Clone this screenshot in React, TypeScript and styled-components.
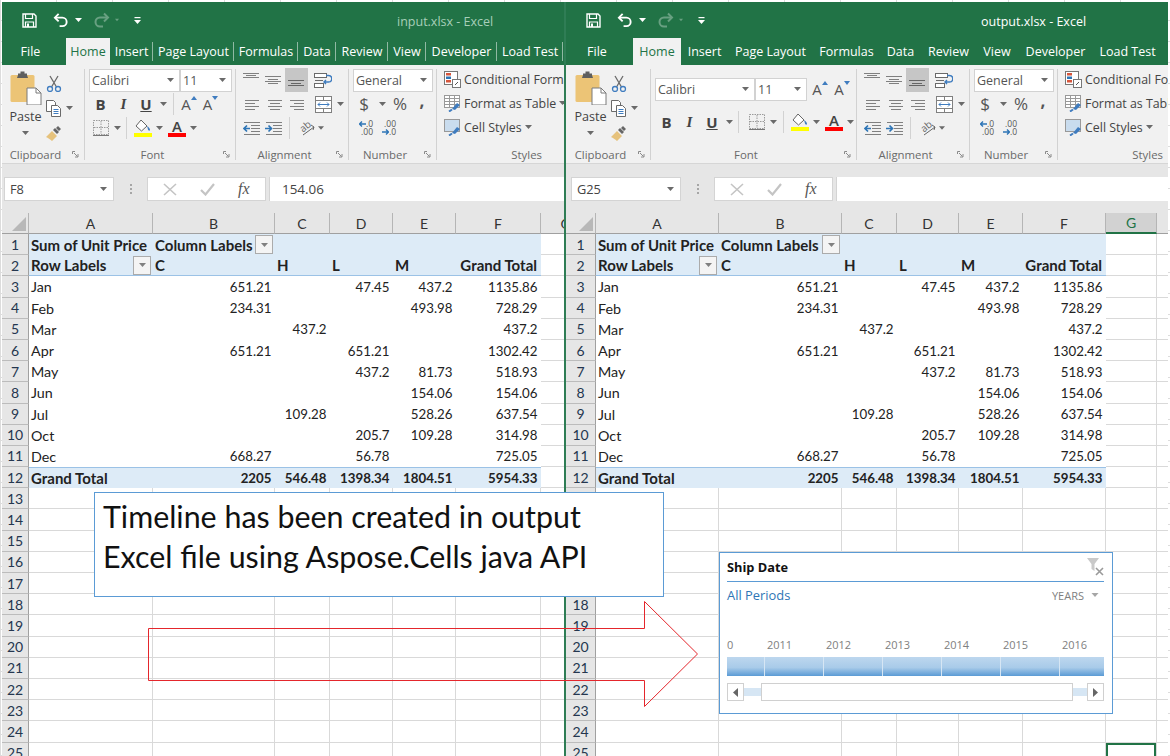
import React from "react";
import styled, { createGlobalStyle } from "styled-components";

const Global = createGlobalStyle`
  html, body { margin: 0; padding: 0; background: #fff; overflow: hidden; }
  #root { width: 1170px; height: 756px; overflow: hidden; }
`;

const UI = `"Open Sans", "Noto Sans", sans-serif`;
const CELL = `Lato, "Liberation Sans", sans-serif`;

const Page = styled.div`
  position: relative; width: 1170px; height: 756px; box-sizing: border-box;
  padding: 2px 2px 0 2px; display: flex; overflow: hidden;
  background-color: #fff;
  background-image: repeating-linear-gradient(90deg, #dcdcdc 0 1px, transparent 1px 56px),
    repeating-linear-gradient(0deg, #dcdcdc 0 1px, transparent 1px 21px);
`;
const Pane = styled.section<{ $w: number; $divider?: boolean }>`
  width: ${(p) => p.$w}px; flex: none; box-sizing: border-box; display: flex; flex-direction: column;
  height: 754px; overflow: hidden; background: #fff; font-family: ${UI};
  ${(p) => p.$divider && "border-left: 2px solid #2f7d55;"}
`;
const TitleBar = styled.div`
  height: 36px; background: #217346; display: flex; align-items: center; flex: none; position: relative;
`;
const Qat = styled.div<{ $w: number }>`
  width: ${(p) => p.$w}px; flex: none; display: flex; align-items: center; padding-left: 19px; box-sizing: border-box;
`;
const QatSlot = styled.span<{ $w: number; $off?: boolean; $ml?: number }>`
  width: ${(p) => p.$w}px; flex: none; display: flex; align-items: center; justify-content: center;
  margin-left: ${(p) => p.$ml || 0}px;
  opacity: ${(p) => (p.$off ? 0.32 : 1)};
`;
const TitleText = styled.div<{ $active?: boolean }>`
  font-size: 12.5px; padding-top: 3px; white-space: nowrap; color: ${(p) => (p.$active ? "#fff" : "#a7cfb9")};
`;
const Tabs = styled.div`
  height: 27px; background: #217346; display: flex; flex: none; align-items: stretch;
`;
const Tab = styled.div<{ $w: number; $sep?: boolean; $active?: boolean; $gap?: number }>`
  width: ${(p) => p.$w}px; margin-right: ${(p) => p.$gap || 0}px; flex: none; box-sizing: border-box;
  display: flex; align-items: center; justify-content: center; position: relative; white-space: nowrap;
  font-size: 12.5px; padding-bottom: 1px;
  color: ${(p) => (p.$active ? "#217346" : "#fff")};
  background: ${(p) => (p.$active ? "#f1f1f1" : "transparent")};
  ${(p) => p.$sep && `&::after { content: ""; position: absolute; right: 0; top: 4px; bottom: 4px; width: 1px; background: rgba(255,255,255,.5); }`}
`;
const Ribbon = styled.div`
  height: 98px; background: #f1f1f1; display: flex; flex: none; overflow: hidden;
  border-bottom: 1px solid #d6d6d6; box-sizing: content-box;
`;
const Group = styled.div<{ $w?: number; $fill?: boolean; $noSep?: boolean }>`
  position: relative; box-sizing: border-box; display: flex; flex-direction: column;
  ${(p) => (p.$fill ? "flex: 1; min-width: 0;" : `width: ${p.$w}px; flex: none;`)}
  ${(p) => !p.$noSep && `&::after { content: ""; position: absolute; right: 0; top: 4px; bottom: 3px; width: 1px; background: #d2d2d2; }`}
`;
const GroupBody = styled.div<{ $top?: number; $gap?: number; $pl?: number; $row?: boolean }>`
  flex: 1; min-height: 0; box-sizing: border-box; display: flex;
  flex-direction: ${(p) => (p.$row ? "row" : "column")};
  ${(p) => p.$row && "justify-content: center;"}
  padding: ${(p) => p.$top ?? 3}px 0 0 ${(p) => p.$pl ?? 4}px;
  gap: ${(p) => p.$gap ?? 0}px;
`;
const GroupFoot = styled.div<{ $pr?: number; $end?: boolean }>`
  height: 18px; flex: none; display: flex; align-items: center; position: relative;
  justify-content: ${(p) => (p.$end ? "flex-end" : "center")};
  padding-right: ${(p) => p.$pr ?? 16}px; box-sizing: border-box;
  font-size: 11.4px; color: #6a6a6a;
`;
const Launcher = styled.span`
  position: absolute; right: 6px; top: 6px; display: flex;
`;
const Row = styled.div<{ $ml?: number }>`
  height: 24px; flex: none; display: flex; align-items: center; margin-left: ${(p) => p.$ml || 0}px; white-space: nowrap;
`;
const Btn = styled.span<{ $w: number; $on?: boolean; $ml?: number }>`
  width: ${(p) => p.$w}px; height: 24px; flex: none; margin-left: ${(p) => p.$ml || 0}px;
  display: flex; align-items: center; justify-content: center; color: #444;
  background: ${(p) => (p.$on ? "#c6c6c6" : "transparent")};
`;
const Letter = styled.span<{ $kind: "b" | "i" | "u" }>`
  font-size: 15px; color: #444; font-weight: 700;
  font-family: ${(p) => (p.$kind === "i" ? `"Liberation Serif", serif` : `"Open Sans", sans-serif`)};
  font-style: ${(p) => (p.$kind === "i" ? "italic" : "normal")};
  text-decoration: ${(p) => (p.$kind === "u" ? "underline" : "none")};
`;
const Glyph = styled.span<{ $size: number; $bold?: boolean; $up?: number }>`
  font-size: ${(p) => p.$size}px; color: #555; font-family: ${UI}; line-height: 18px;
  font-weight: ${(p) => (p.$bold ? 700 : 400)};
  transform: translateY(${(p) => -(p.$up || 0)}px);
`;
const GrowBox = styled.span`
  display: flex; align-items: flex-start; height: 18px;
  & > svg { margin: 1px 0 0 0; flex: none; }
`;
const ColorStack = styled.span`
  display: flex; flex-direction: column; align-items: center; width: 18px; font-size: 15px; line-height: 14px; color: #444; font-weight: 600;
`;
const ColorBar = styled.i<{ $c: string }>`
  display: block; width: 18px; height: 4px; background: ${(p) => p.$c};
`;
const OrientBox = styled.span`
  position: relative; width: 17px; height: 16px; display: block;
`;
const OrientText = styled.span`
  position: absolute; left: 0; top: 0; font-size: 10px; line-height: 12px; color: #666; transform: rotate(-40deg); display: block;
`;
const OrientArrow = styled.svg`
  position: absolute; left: 0; top: 0;
`;
const DecBox = styled.span`
  display: flex; flex-direction: column; align-items: flex-end; font-size: 8.5px; line-height: 8px; color: #555; width: 16px;
`;
const DecLine = styled.span`
  display: flex; align-items: center; gap: 0;
`;
const Sep = styled.span<{ $mx: number }>`
  width: 1px; height: 22px; background: #d2d2d2; flex: none; margin: 0 ${(p) => p.$mx}px;
`;
const Select = styled.div<{ $w: number }>`
  width: ${(p) => p.$w}px; height: 23px; flex: none; box-sizing: border-box; background: #fff;
  border: 1px solid #d2d2d2; display: flex; align-items: center; justify-content: space-between;
  padding: 0 5px 0 2px; font-size: 12.5px; color: #555;
`;
const Paste = styled.div`
  width: 38px; flex: none; display: flex; flex-direction: column; align-items: center; font-size: 12.6px; color: #444;
`;
const PasteLabel = styled.span`
  margin-top: 4px; line-height: 16px;
`;
const PasteCaret = styled.span`
  margin-top: 6px; display: flex;
`;
const ClipTools = styled.div`
  width: 36px; flex: none; display: flex; flex-direction: column; padding: 0; gap: 1px;
`;
const StyleLine = styled.div`
  height: 24px; flex: none; display: flex; align-items: center; gap: 3px; white-space: nowrap;
  font-size: 12.4px; color: #444;
  & > svg { flex: none; }
`;
const FormulaBar = styled.div`
  height: 49px; flex: none; background: #e6e6e6; box-sizing: border-box; padding-top: 13px;
  display: flex; align-items: flex-start;
`;
const NameBox = styled.div<{ $w: number; $ml: number }>`
  width: ${(p) => p.$w}px; margin-left: ${(p) => p.$ml}px; height: 24px; box-sizing: border-box; flex: none;
  background: #fff; border: 1px solid #d4d4d4; display: flex; align-items: center; justify-content: space-between;
  padding: 0 6px 0 5px; font-size: 12.8px; color: #444;
`;
const Dots = styled.div<{ $w: number }>`
  width: ${(p) => p.$w}px; height: 24px; flex: none; display: flex; flex-direction: column; align-items: center;
  justify-content: center; gap: 2px;
  & > i { width: 2px; height: 2px; background: #a6a6a6; display: block; }
`;
const FxBox = styled.div`
  width: 119px; height: 24px; flex: none; box-sizing: border-box; background: #fff; border: 1px solid #d4d4d4;
  display: flex; align-items: center; justify-content: space-around; padding: 0 4px;
`;
const FxText = styled.span`
  font-family: "Liberation Serif", serif; font-style: italic; font-size: 16px; color: #555;
`;
const FormulaInput = styled.div`
  flex: 1; height: 24px; margin-left: 3px; box-sizing: border-box; background: #fff; border-left: 1px solid #d4d4d4;
  display: flex; align-items: center; padding-left: 12px; font-size: 13.4px; color: #444;
`;
const Sheet = styled.div<{ $cols: string }>`
  display: grid; grid-template-columns: ${(p) => p.$cols}; grid-template-rows: 21px; grid-auto-rows: 21.2px;
  font-family: ${CELL}; font-size: 14.3px; color: #222; overflow: hidden; flex: 1;
`;
const Corner = styled.div`
  background: #e6e6e6; border-bottom: 1px solid #a0a0a0; border-right: 1px solid #b5b5b5; position: relative;
  &::after { content: ""; position: absolute; right: 2px; bottom: 2px; width: 14px; height: 14px; background: #b8b8b8; clip-path: polygon(100% 0, 100% 100%, 0 100%); }
`;
const ColHead = styled.div<{ $on?: boolean }>`
  background: ${(p) => (p.$on ? "#d2d2d2" : "#e6e6e6")}; display: flex; align-items: center; justify-content: center;
  border-right: 1px solid #b5b5b5; border-bottom: ${(p) => (p.$on ? "2px solid #217346" : "1px solid #a0a0a0")};
  color: ${(p) => (p.$on ? "#217346" : "#333")}; font-size: 14px; overflow: hidden;
`;
const RowHead = styled.div`
  background: #e6e6e6; display: flex; align-items: center; justify-content: center; box-sizing: border-box;
  border-right: 1px solid #a0a0a0; border-bottom: 1px solid #bcbcbc; color: #24364f; font-size: 14px;
`;
const Cell = styled.div<{ $zone: "fill" | "plain" | "grid" | "total" | "label"; $right?: boolean; $bold?: boolean; $num?: boolean; $active?: boolean }>`
  box-sizing: border-box; display: flex; align-items: center; white-space: nowrap; padding: 0 4px 0 2px; min-width: 0;
  justify-content: ${(p) => (p.$right ? "flex-end" : "flex-start")};
  font-weight: ${(p) => (p.$bold ? 700 : 400)};
  ${(p) => p.$bold && "font-size: 15px;"}
  ${(p) => p.$num && "font-size: 13.3px; padding-right: 3.5px;"}
  background: ${(p) => (p.$zone === "fill" || p.$zone === "total" || p.$zone === "label" ? "#ddebf7" : "#fff")};
  ${(p) => p.$zone === "grid" && "border-right: 1px solid #d9d9d9; border-bottom: 1px solid #d9d9d9;"}
  ${(p) => p.$zone === "label" && "border-bottom: 1px solid #9bc2e6;"}
  ${(p) => p.$zone === "total" && "border-top: 1px solid #9bc2e6;"}
  ${(p) => p.$active && "box-shadow: inset 0 0 0 2px #217346;"}
`;
const CellFill = styled.span`
  flex: 1;
`;
const FilterBtn = styled.span`
  width: 18px; height: 19px; flex: none; box-sizing: border-box; background: #f4f4f4; border: 1px solid #ababab;
  display: flex; align-items: center; justify-content: center; margin-right: -2px;
`;
const Callout = styled.div`
  position: absolute; left: 94px; top: 492px; width: 570px; height: 105px; box-sizing: border-box; background: #fff;
  border: 1px solid #5b9bd5; padding: 3px 8px; font-family: ${CELL}; font-size: 30.4px; line-height: 40px; color: #111; white-space: nowrap;
`;
const ArrowSvg = styled.svg`
  position: absolute; left: 0; top: 0; pointer-events: none;
`;
const Timeline = styled.div`
  position: absolute; left: 719px; top: 552px; width: 394px; height: 162px; box-sizing: border-box; background: #fff;
  border: 1px solid #5b9bd5; display: flex; flex-direction: column; padding: 0 8px 0 7px; font-family: ${UI};
`;
const TlHead = styled.div`
  height: 29px; box-sizing: border-box; flex: none; border-bottom: 1px solid #5b9bd5; display: flex; align-items: center; justify-content: space-between;
  font-size: 12.8px; font-weight: 700; color: #111; padding-bottom: 1px;
`;
const TlFilter = styled.span`
  display: flex;
`;
const TlMeta = styled.div`
  height: 27px; flex: none; display: flex; align-items: center; justify-content: space-between;
  font-size: 12.9px; color: #2e75b6; padding-bottom: 1px; box-sizing: border-box;
`;
const TlLevel = styled.span`
  display: flex; align-items: center; gap: 7px; font-size: 11px; color: #808080; padding-right: 5px;
`;
const TlYears = styled.div`
  margin-top: 26px; height: 19px; flex: none; display: grid; grid-template-columns: 38px repeat(5, 59px) 1fr;
  font-size: 11px; color: #808080; align-items: center; line-height: 19px;
`;
const TlYear = styled.span<{ $first?: boolean }>`
  padding-left: ${(p) => (p.$first ? 0 : 2)}px;
`;
const TlBar = styled.div`
  margin-top: 3px; height: 19px; flex: none; display: grid; grid-template-columns: 38px repeat(5, 59px) 1fr;
  background: linear-gradient(#bdd7ee 0%, #a9cbe9 55%, #5b9bd5 100%);
`;
const TlSeg = styled.span<{ $last?: boolean }>`
  border-right: ${(p) => (p.$last ? "none" : "1px solid #d6e6f4")};
`;
const TlScroll = styled.div`
  margin-top: 7px; height: 18px; flex: none; display: flex; align-items: center;
`;
const TlArrow = styled.span`
  width: 17px; height: 18px; box-sizing: border-box; flex: none; border: 1px solid #d0d0d0; background: #fff;
  display: flex; align-items: center; justify-content: center;
`;
const TlTrack = styled.span<{ $w: number }>`
  width: ${(p) => p.$w}px; height: 8px; flex: none; background: #d6e6f4;
`;
const TlThumb = styled.span`
  flex: 1; height: 18px; box-sizing: border-box; border: 1px solid #d0d0d0; background: #fff;
`;

/* ---------- icons ---------- */
const Caret = ({ c = "#6a6a6a", w = 7 }: { c?: string; w?: number }) => (
  <svg width={w} height={4} viewBox="0 0 7 4"><path d="M0 0h7L3.5 4z" fill={c} /></svg>
);
const SaveIcon = () => (
  <svg width="15" height="15" viewBox="0 0 15 15" fill="none" stroke="#fff" strokeWidth="1.4">
    <path d="M1 1h11l2 2v11H1z" /><path d="M3.5 1v4.5h7V1" strokeWidth="1.2" /><path d="M3.5 14V9h8v5" strokeWidth="1.2" /><rect x="5" y="10.5" width="2" height="3.5" fill="#fff" stroke="none" />
  </svg>
);
const UndoIcon = ({ flip }: { flip?: boolean }) => (
  <svg width="17" height="16" viewBox="0 0 17 16" fill="none" stroke="#fff" strokeWidth="2" style={flip ? { transform: "scaleX(-1)" } : undefined}>
    <path d="M6 1.5L2 5.5l4 4" /><path d="M2.5 5.5H10a4.5 4.5 0 0 1 0 9H7" />
  </svg>
);
const QatMore = () => (
  <svg width="7" height="7" viewBox="0 0 7 7" fill="#fff"><rect x="0.5" y="0" width="6" height="1.2" /><path d="M0 3h7L3.5 7z" /></svg>
);
const PasteIcon = () => (
  <svg width="32" height="34" viewBox="0 0 32 34">
    <rect x="0.5" y="4" width="24" height="27" rx="1.5" fill="#ecc476" />
    <path d="M8 4V2.5h2.5V0.5h4V2.5H17V4l1 3H7z" fill="#5f5f5f" />
    <path d="M17 17h9l5 5v12H17z" fill="#fff" stroke="#7a7a7a" />
    <path d="M26 17v5h5" fill="none" stroke="#7a7a7a" />
  </svg>
);
const CutIcon = () => (
  <svg width="16" height="17" viewBox="0 0 16 17" fill="none">
    <path d="M4 1l6.5 11M12 1L5.5 12" stroke="#6a6a6a" strokeWidth="1.3" />
    <circle cx="4" cy="14" r="2.5" stroke="#3f7cbf" strokeWidth="1.3" /><circle cx="12" cy="14" r="2.5" stroke="#3f7cbf" strokeWidth="1.3" />
  </svg>
);
const CopyIcon = () => (
  <svg width="16" height="17" viewBox="0 0 16 17" fill="#fff" stroke="#6a6a6a">
    <path d="M.5.5h7l2 2v9h-9z" /><path d="M5.5 5.5h6l3 3v8h-9z" />
    <path d="M7.5 9.5h5M7.5 11.5h5M7.5 13.5h5" stroke="#3f7cbf" />
  </svg>
);
const BrushIcon = () => (
  <svg width="16" height="15" viewBox="0 0 16 15">
    <path d="M0 11l6-6 5 5-5 5c-2-2-4-3-6-4z" fill="#e6c27c" />
    <path d="M7 4l2-2 4 4-2 2zM10 2l2-2 3 3-2 2z" fill="#666" />
  </svg>
);
const GrowA = ({ dir }: { dir: "up" | "down" }) => (
  <GrowBox>
    <Glyph $size={15}>A</Glyph>
    <svg width="6" height="4" viewBox="0 0 6 4"><path d={dir === "up" ? "M0 4l3-4 3 4z" : "M0 0h6L3 4z"} fill="#3f7cbf" /></svg>
  </GrowBox>
);
const BorderIcon = () => (
  <svg width="16" height="16" viewBox="0 0 16 16" fill="none" stroke="#9a9a9a" strokeDasharray="1.5 1">
    <rect x=".5" y=".5" width="15" height="14" /><path d="M8 1v13M1 7.5h14" />
    <path d="M0 15.5h16" strokeDasharray="none" stroke="#777" />
  </svg>
);
const FillIcon = () => (
  <svg width="18" height="18" viewBox="0 0 18 18">
    <path d="M7 1l6 6-5.5 5L2 7z" fill="#fff" stroke="#666" />
    <path d="M13 7c2 1 3 3 3 4s-2 1-2-.5z" fill="#3f7cbf" />
    <rect x="0" y="14" width="18" height="4" fill="#ffff00" />
  </svg>
);
const ColorIcon = () => (
  <ColorStack>A<ColorBar $c="#ff0000" /></ColorStack>
);
const Lines = ({ d, c = "#808080" }: { d: number[][]; c?: string }) => (
  <svg width="17" height="18" viewBox="0 0 17 18" stroke={c}>
    {d.map(([a, b, y], i) => <line key={i} x1={a} x2={b} y1={y + 0.5} y2={y + 0.5} />)}
  </svg>
);
const alignSets = {
  top: [[0, 16, 2], [3, 13, 4], [0, 16, 6]],
  mid: [[0, 16, 5], [3, 13, 8], [0, 16, 10], [3, 13, 12]],
  bot: [[0, 16, 9], [3, 13, 12], [0, 16, 14]],
  left: [[1, 15, 5], [1, 11, 8], [1, 15, 11], [1, 11, 14]],
  center: [[1, 15, 5], [3, 13, 8], [1, 15, 11], [3, 13, 14]],
  right: [[1, 15, 5], [5, 15, 8], [1, 15, 11], [5, 15, 14]],
};
const WrapIcon = () => (
  <svg width="18" height="17" viewBox="0 0 18 17" fill="none" stroke="#6a6a6a">
    <rect x=".5" y="1.5" width="12" height="4" fill="#fff" /><rect x=".5" y="11.5" width="9" height="4" fill="#fff" /><path d="M1 8.5h8" />
    <path d="M12 3.5h2.5a2.5 2.5 0 0 1 0 6.5H10M12 8l-2 2 2 2" stroke="#3f7cbf" strokeWidth="1.4" />
  </svg>
);
const MergeIcon = () => (
  <svg width="17" height="17" viewBox="0 0 17 17" fill="none" stroke="#808080">
    <rect x=".5" y=".5" width="16" height="16" fill="#fff" /><path d="M1 4.5h15M1 12.5h15M8.5 1v3M8.5 13v3" />
    <path d="M3 8.5h11M5 6.5l-2 2 2 2M12 6.5l2 2-2 2" stroke="#3f7cbf" />
  </svg>
);
const IndentIcon = ({ out }: { out?: boolean }) => (
  <svg width="17" height="15" viewBox="0 0 17 15" fill="none">
    <g stroke="#808080"><path d="M1 1.5h16M8 4.5h9M8 7.5h9M8 10.5h9M1 13.5h16" /></g>
    <path d={out ? "M7 7.5H1M4 4.5l-3 3 3 3" : "M0 7.5h6M3.5 4.5l3 3-3 3"} stroke="#2e75b6" strokeWidth="1.7" />
  </svg>
);
const OrientIcon = () => (
  <OrientBox>
    <OrientText>ab</OrientText>
    <OrientArrow width="17" height="16" viewBox="0 0 17 16" fill="none"><path d="M4 15l11-8M12 5l3 2-1 3" stroke="#666" /></OrientArrow>
  </OrientBox>
);
const DecArrow = ({ right }: { right?: boolean }) => (
  <svg width="7" height="6" viewBox="0 0 7 6" fill="none" stroke="#2e75b6" strokeWidth="1.4"><path d={right ? "M0 3h6M4 .5L6.5 3 4 5.5" : "M7 3H1M3 .5L.5 3 3 5.5"} /></svg>
);
const DecIcon = ({ more }: { more?: boolean }) => (
  <DecBox>
    {more ? <DecLine>.00</DecLine> : <DecLine><DecArrow />.0</DecLine>}
    {more ? <DecLine><DecArrow right />.0</DecLine> : <DecLine>.00</DecLine>}
  </DecBox>
);
const CondIcon = () => (
  <svg width="17" height="17" viewBox="0 0 17 17" stroke="#777" fill="#fff">
    <rect x=".5" y=".5" width="13" height="13" />
    <rect x="2" y="2" width="5" height="2.5" fill="#d7563c" stroke="none" /><rect x="2" y="5.5" width="5" height="2.5" fill="#2e75b6" stroke="none" /><rect x="2" y="9" width="5" height="2.5" fill="#d7563c" stroke="none" />
    <rect x="8.5" y="8.5" width="8" height="8" /><path d="M11 14l3-3" stroke="#555" />
  </svg>
);
const TableIcon = ({ tint }: { tint?: boolean }) => (
  <svg width="17" height="17" viewBox="0 0 17 17" fill="none" stroke="#999">
    <rect x=".5" y=".5" width="15" height="12" fill={tint ? "#c9dcee" : "#fff"} />
    {!tint && <path d="M.5 3.5h15M.5 6.5h15M.5 9.5h15M5.5 1v11M10.5 1v11" />}
    <path d="M8 14l5-6 3 2-5 5z" fill="#3f7cbf" stroke="none" /><path d="M5 16.5l3-2" stroke="#3f7cbf" strokeWidth="2" />
  </svg>
);
const LaunchIcon = () => (
  <svg width="7" height="7" viewBox="0 0 7 7" fill="none" stroke="#8a8a8a">
    <path d="M.5 3V.5H3" /><path d="M2 2l3.5 3.5M6 3v3H3" />
  </svg>
);
const XIcon = () => (
  <svg width="14" height="13" viewBox="0 0 14 13" stroke="#c4c4c4" strokeWidth="1.6"><path d="M1 1l12 11M13 1L1 12" /></svg>
);
const CheckIcon = () => (
  <svg width="15" height="13" viewBox="0 0 15 13" fill="none" stroke="#c4c4c4" strokeWidth="2.2"><path d="M1 7l4.5 4.5L14 1" /></svg>
);
const FilterClear = () => (
  <svg width="17" height="18" viewBox="0 0 17 18" fill="none">
    <path d="M0 0h12L7.5 6v7l-3-2V6z" fill="#c9c9c9" />
    <path d="M9 10l7 7M16 10l-7 7" stroke="#9a9a9a" strokeWidth="1.6" />
  </svg>
);
const SideArrow = ({ left }: { left?: boolean }) => (
  <svg width="5" height="9" viewBox="0 0 5 9"><path d={left ? "M5 0v9L0 4.5z" : "M0 0v9l5-4.5z"} fill="#666" /></svg>
);

/* ---------- ribbon parts ---------- */
const Foot = ({ label, launch = true, pr, end }: { label: string; launch?: boolean; pr?: number; end?: boolean }) => (
  <GroupFoot $pr={pr} $end={end}>
    {label}
    {launch && <Launcher><LaunchIcon /></Launcher>}
  </GroupFoot>
);

const ClipboardGroup = ({ w }: { w: number }) => (
  <Group $w={w}>
    <GroupBody $row $top={6} $pl={0}>
      <Paste>
        <PasteIcon />
        <PasteLabel>Paste</PasteLabel>
        <PasteCaret><Caret /></PasteCaret>
      </Paste>
      <ClipTools>
        <Btn $w={18}><CutIcon /></Btn>
        <Row><Btn $w={18}><CopyIcon /></Btn><Btn $w={14}><Caret /></Btn></Row>
        <Btn $w={18}><BrushIcon /></Btn>
      </ClipTools>
    </GroupBody>
    <Foot label="Clipboard" />
  </Group>
);

const Bold = () => (
  <>
    <Btn $w={23}><Letter $kind="b">B</Letter></Btn>
    <Btn $w={23}><Letter $kind="i">I</Letter></Btn>
    <Btn $w={22}><Letter $kind="u">U</Letter></Btn>
    <Btn $w={12}><Caret /></Btn>
  </>
);
const FontCompact = () => (
  <Group $w={151}>
    <GroupBody>
      <Row>
        <Select $w={91}>Calibri<Caret /></Select>
        <Select $w={52}>11<Caret /></Select>
      </Row>
      <Row>
        <Bold /><Sep $mx={4} />
        <Btn $w={22}><GrowA dir="up" /></Btn>
        <Btn $w={21}><GrowA dir="down" /></Btn>
      </Row>
      <Row>
        <Btn $w={24}><BorderIcon /></Btn><Btn $w={8}><Caret /></Btn><Sep $mx={5} />
        <Btn $w={22}><FillIcon /></Btn><Btn $w={10}><Caret /></Btn>
        <Btn $w={22} $ml={2}><ColorIcon /></Btn><Btn $w={10}><Caret /></Btn>
      </Row>
    </GroupBody>
    <Foot label="Font" />
  </Group>
);
const FontWide = () => (
  <Group $w={206}>
    <GroupBody $top={12} $gap={9}>
      <Row>
        <Select $w={100}>Calibri<Caret /></Select>
        <Select $w={52}>11<Caret /></Select>
        <Btn $w={22} $ml={2}><GrowA dir="up" /></Btn>
        <Btn $w={22}><GrowA dir="down" /></Btn>
      </Row>
      <Row>
        <Bold /><Sep $mx={3} />
        <Btn $w={22} $ml={4}><BorderIcon /></Btn><Btn $w={10}><Caret /></Btn><Sep $mx={5} />
        <Btn $w={22}><FillIcon /></Btn><Btn $w={10}><Caret /></Btn>
        <Btn $w={22} $ml={2}><ColorIcon /></Btn><Btn $w={10}><Caret /></Btn>
      </Row>
    </GroupBody>
    <Foot label="Font" />
  </Group>
);
const AlignmentGroup = () => (
  <Group $w={113}>
    <GroupBody>
      <Row>
        <Btn $w={22}><Lines d={alignSets.top} /></Btn>
        <Btn $w={23}><Lines d={alignSets.mid} /></Btn>
        <Btn $w={23} $on><Lines d={alignSets.bot} c="#666" /></Btn>
        <Btn $w={22} $ml={4}><WrapIcon /></Btn>
      </Row>
      <Row>
        <Btn $w={24}><Lines d={alignSets.left} /></Btn>
        <Btn $w={22}><Lines d={alignSets.center} /></Btn>
        <Btn $w={22}><Lines d={alignSets.right} /></Btn>
        <Btn $w={22} $ml={4}><MergeIcon /></Btn>
        <Btn $w={12}><Caret /></Btn>
      </Row>
      <Row>
        <Btn $w={22}><IndentIcon out /></Btn>
        <Btn $w={23}><IndentIcon /></Btn>
        <Sep $mx={4} />
        <Btn $w={22} $ml={2}><OrientIcon /></Btn>
        <Btn $w={6}><Caret /></Btn>
      </Row>
    </GroupBody>
    <Foot label="Alignment" />
  </Group>
);
const NumberGroup = () => (
  <Group $w={88}>
    <GroupBody>
      <Row><Select $w={80}>General<Caret /></Select></Row>
      <Row>
        <Btn $w={22}><Glyph $size={17}>$</Glyph></Btn>
        <Btn $w={14}><Caret /></Btn>
        <Btn $w={22}><Glyph $size={17}>%</Glyph></Btn>
        <Btn $w={22}><Glyph $size={17} $bold $up={3}>,</Glyph></Btn>
      </Row>
      <Row>
        <Btn $w={24}><DecIcon /></Btn>
        <Btn $w={22}><DecIcon more /></Btn>
      </Row>
    </GroupBody>
    <Foot label="Number" />
  </Group>
);
const StylesGroup = ({ pr }: { pr: number }) => (
  <Group $fill $noSep>
    <GroupBody $pl={7} $top={2}>
      <StyleLine><CondIcon />Conditional Formatting<Caret /></StyleLine>
      <StyleLine><TableIcon />Format as Table<Caret /></StyleLine>
      <StyleLine><TableIcon tint />Cell Styles<Caret /></StyleLine>
    </GroupBody>
    <Foot label="Styles" launch={false} end pr={pr} />
  </Group>
);

/* ---------- sheet ---------- */
const LETTERS = ["A", "B", "C", "D", "E", "F", "G", ""];
type RowData = { label: string; vals: string[] };
const ROWS: RowData[] = [
  { label: "Jan", vals: ["651.21", "", "47.45", "437.2", "1135.86"] },
  { label: "Feb", vals: ["234.31", "", "", "493.98", "728.29"] },
  { label: "Mar", vals: ["", "437.2", "", "", "437.2"] },
  { label: "Apr", vals: ["651.21", "", "651.21", "", "1302.42"] },
  { label: "May", vals: ["", "", "437.2", "81.73", "518.93"] },
  { label: "Jun", vals: ["", "", "", "154.06", "154.06"] },
  { label: "Jul", vals: ["", "109.28", "", "528.26", "637.54"] },
  { label: "Oct", vals: ["", "", "205.7", "109.28", "314.98"] },
  { label: "Dec", vals: ["668.27", "", "56.78", "", "725.05"] },
];
const TOTAL = ["2205", "546.48", "1398.34", "1804.51", "5954.33"];
const HEAD2 = ["C", "H", "L", "M"];

const Filter = () => <FilterBtn><Caret c="#808080" /></FilterBtn>;

const SheetGrid = ({ cols, extra, active, coveredFrom = 0, coveredTo = -1 }: { cols: string; extra: number; active?: boolean; coveredFrom?: number; coveredTo?: number }) => {
  const out: React.ReactNode[] = [];
  const blanks = (r: number, from: number) => {
    for (let c = from; c < 6 + extra; c++) {
      const isActive = active && r === 25 && c === 6;
      out.push(<Cell key={`${r}-${c}`} $zone="grid" $active={isActive} />);
    }
  };
  out.push(<Corner key="corner" />);
  for (let c = 0; c < 6 + extra; c++) {
    out.push(<ColHead key={`h${c}`} $on={active && c === 6}>{LETTERS[c]}</ColHead>);
  }
  for (let r = 1; r <= 25; r++) {
    out.push(<RowHead key={`r${r}`}>{r >= coveredFrom && r <= coveredTo ? "" : r}</RowHead>);
    if (r === 1) {
      out.push(<Cell key="a1" $zone="fill" $bold>Sum of Unit Price</Cell>);
      out.push(<Cell key="b1" $zone="fill" $bold>Column Labels<CellFill /><Filter /></Cell>);
      [2, 3, 4, 5].forEach((c) => out.push(<Cell key={`1-${c}`} $zone="fill" />));
      blanks(r, 6);
    } else if (r === 2) {
      out.push(<Cell key="a2" $zone="label" $bold>Row Labels<CellFill /><Filter /></Cell>);
      HEAD2.forEach((h) => out.push(<Cell key={`2${h}`} $zone="label" $bold>{h}</Cell>));
      out.push(<Cell key="2gt" $zone="label" $bold $right>Grand Total</Cell>);
      blanks(r, 6);
    } else if (r <= 11) {
      const d = ROWS[r - 3];
      out.push(<Cell key={`${r}a`} $zone="plain">{d.label}</Cell>);
      d.vals.forEach((v, i) => out.push(<Cell key={`${r}-${i}`} $zone="plain" $right $num>{v}</Cell>));
      blanks(r, 6);
    } else if (r === 12) {
      out.push(<Cell key="12a" $zone="total" $bold>Grand Total</Cell>);
      TOTAL.forEach((v, i) => out.push(<Cell key={`12-${i}`} $zone="total" $bold $right $num>{v}</Cell>));
      blanks(r, 6);
    } else {
      blanks(r, 0);
    }
  }
  return <Sheet $cols={cols}>{out}</Sheet>;
};

type TabDef = { t: string; w: number };
const TabStrip = ({ file, gap, home, tabs, sep }: { file: number; gap: number; home: number; tabs: TabDef[]; sep?: boolean }) => (
  <Tabs>
    <Tab $w={file} $gap={gap}>File</Tab>
    <Tab $w={home} $active>Home</Tab>
    {tabs.map((x) => <Tab key={x.t} $w={x.w} $sep={sep}>{x.t}</Tab>)}
  </Tabs>
);
const QatIcons = () => (
  <>
    <QatSlot $w={16}><SaveIcon /></QatSlot>
    <QatSlot $w={16} $ml={16}><UndoIcon /></QatSlot>
    <QatSlot $w={18}><Caret c="#fff" /></QatSlot>
    <QatSlot $w={28} $off><UndoIcon flip /></QatSlot>
    <QatSlot $w={4} $off><Caret c="#fff" /></QatSlot>
    <QatSlot $w={36}><QatMore /></QatSlot>
  </>
);

const TimelineCard = () => (
  <Timeline>
    <TlHead>Ship Date<TlFilter><FilterClear /></TlFilter></TlHead>
    <TlMeta>All Periods<TlLevel>YEARS<Caret c="#a6a6a6" w={8} /></TlLevel></TlMeta>
    <TlYears>
      <TlYear $first>0</TlYear>
      {["2011", "2012", "2013", "2014", "2015", "2016"].map((y) => <TlYear key={y}>{y}</TlYear>)}
    </TlYears>
    <TlBar>
      {[0, 1, 2, 3, 4, 5, 6].map((i) => <TlSeg key={i} $last={i === 6} />)}
    </TlBar>
    <TlScroll>
      <TlArrow><SideArrow left /></TlArrow>
      <TlTrack $w={17} />
      <TlThumb />
      <TlTrack $w={14} />
      <TlArrow><SideArrow /></TlArrow>
    </TlScroll>
  </Timeline>
);

const LEFT_TABS: TabDef[] = [
  { t: "Insert", w: 43 }, { t: "Page Layout", w: 81 }, { t: "Formulas", w: 64 }, { t: "Data", w: 38 },
  { t: "Review", w: 52 }, { t: "View", w: 38 }, { t: "Developer", w: 71 }, { t: "Load Test", w: 66 },
];
const RIGHT_TABS: TabDef[] = [
  { t: "Insert", w: 47 }, { t: "Page Layout", w: 85 }, { t: "Formulas", w: 67 }, { t: "Data", w: 41 },
  { t: "Review", w: 55 }, { t: "View", w: 42 }, { t: "Developer", w: 75 }, { t: "Load Test", w: 69 },
];

export default function App() {
  return (
    <Page>
      <Global />
      <Pane $w={562}>
        <TitleBar>
          <Qat $w={395}><QatIcons /></Qat>
          <TitleText>input.xlsx - Excel</TitleText>
        </TitleBar>
        <TabStrip file={57} gap={7} home={44} tabs={LEFT_TABS} sep />
        <Ribbon>
          <ClipboardGroup w={83} />
          <FontCompact />
          <AlignmentGroup />
          <NumberGroup />
          <StylesGroup pr={22} />
        </Ribbon>
        <FormulaBar>
          <NameBox $w={110} $ml={2}>F8<Caret /></NameBox>
          <Dots $w={33}><i /><i /><i /></Dots>
          <FxBox><XIcon /><CheckIcon /><FxText>fx</FxText></FxBox>
          <FormulaInput>154.06</FormulaInput>
        </FormulaBar>
        <SheetGrid cols="27px 124px 122px 55px 63px 63px 85px 50px" extra={1} />
      </Pane>
      <Pane $w={604} $divider>
        <TitleBar>
          <Qat $w={415}><QatIcons /></Qat>
          <TitleText $active>output.xlsx - Excel</TitleText>
        </TitleBar>
        <TabStrip file={62} gap={5} home={48} tabs={RIGHT_TABS} />
        <Ribbon>
          <ClipboardGroup w={85} />
          <FontWide />
          <AlignmentGroup />
          <NumberGroup />
          <StylesGroup pr={5} />
        </Ribbon>
        <FormulaBar>
          <NameBox $w={110} $ml={5}>G25<Caret /></NameBox>
          <Dots $w={33}><i /><i /><i /></Dots>
          <FxBox><XIcon /><CheckIcon /><FxText>fx</FxText></FxBox>
          <FormulaInput />
        </FormulaBar>
        <SheetGrid cols="30px 123px 123px 55px 62px 64px 83px 51px 20px" extra={2} active coveredFrom={13} coveredTo={17} />
      </Pane>
      <Callout>Timeline has been created in output<br />Excel file using Aspose.Cells java API</Callout>
      <ArrowSvg width="1170" height="756" viewBox="0 0 1170 756">
        <path d="M148.5 628.5H644.5V601.5L697.5 654L644.5 706.5V680.5H148.5Z" fill="none" stroke="#e4262c" />
      </ArrowSvg>
      <TimelineCard />
    </Page>
  );
}
